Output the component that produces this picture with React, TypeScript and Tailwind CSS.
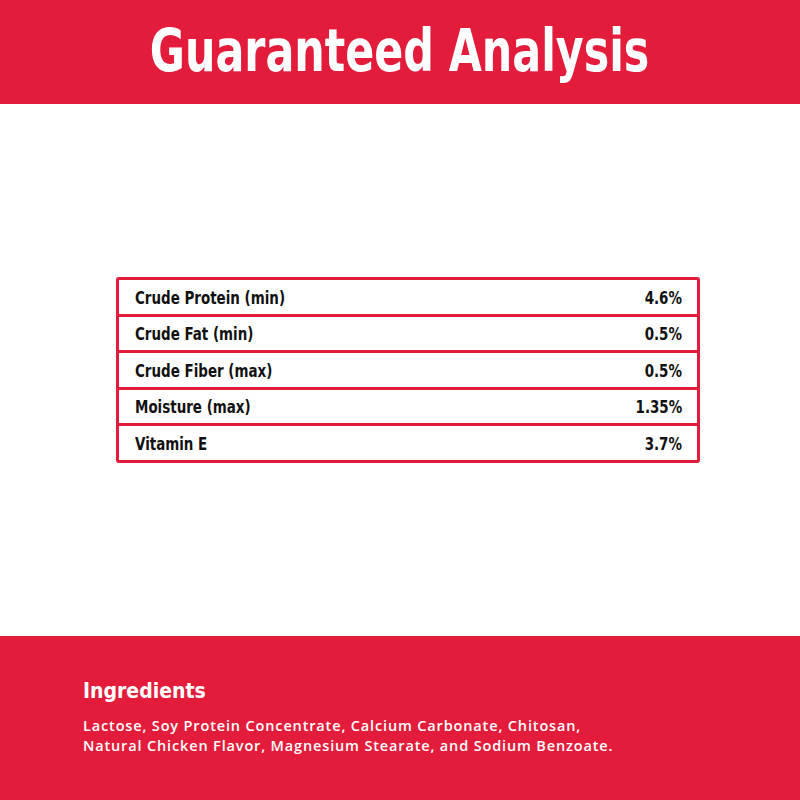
const rows = [
  { label: "Crude Protein (min)", value: "4.6%" },
  { label: "Crude Fat (min)", value: "0.5%" },
  { label: "Crude Fiber (max)", value: "0.5%" },
  { label: "Moisture (max)", value: "1.35%" },
  { label: "Vitamin E", value: "3.7%" },
];

// narrow display face, squeezed a bit to look like the condensed heading font
const condensed = "font-['DejaVu_Sans_Condensed','Liberation_Sans_Narrow',sans-serif]";

export default function App() {
  return (
    <div className="w-[800px] h-[800px] bg-white flex flex-col">
      <header className="h-[104px] bg-[#e31c3c] flex items-center justify-center pb-[2px]">
        <h1
          className={`${condensed} text-white font-bold text-[58px] leading-none inline-block scale-x-[0.82] whitespace-nowrap`}
        >
          Guaranteed Analysis
        </h1>
      </header>

      <main className="flex-1 pt-[173px] pl-[116px]">
        <div className="w-[584px] border-[3px] border-[#e31c3c] rounded-[3px]">
          {rows.map((r, i) => (
            <div
              key={r.label}
              className={`h-[31.5px] pt-[2px] box-content flex items-center justify-between pl-[16px] pr-[15px] ${
                i > 0 ? "border-t-[3px] border-[#e31c3c]" : ""
              } ${condensed} font-bold text-[18px] leading-none text-[#111]`}
            >
              <span className="inline-block origin-left scale-x-[0.83] whitespace-nowrap">{r.label}</span>
              <span className="inline-block origin-right scale-x-[0.83] whitespace-nowrap">{r.value}</span>
            </div>
          ))}
        </div>
      </main>

      <footer className="h-[164px] bg-[#e31c3c] px-[83px] pt-[45px] text-white">
        <h2 className={`${condensed} font-bold text-[21px] leading-none`}>Ingredients</h2>
        <div className="mt-[14px] font-['Open_Sans',sans-serif] font-semibold text-[14.5px] tracking-[0.85px] leading-[20px] whitespace-nowrap">
          <p>Lactose, Soy Protein Concentrate, Calcium Carbonate, Chitosan,</p>
          <p>Natural Chicken Flavor, Magnesium Stearate, and Sodium Benzoate.</p>
        </div>
      </footer>
    </div>
  );
}
